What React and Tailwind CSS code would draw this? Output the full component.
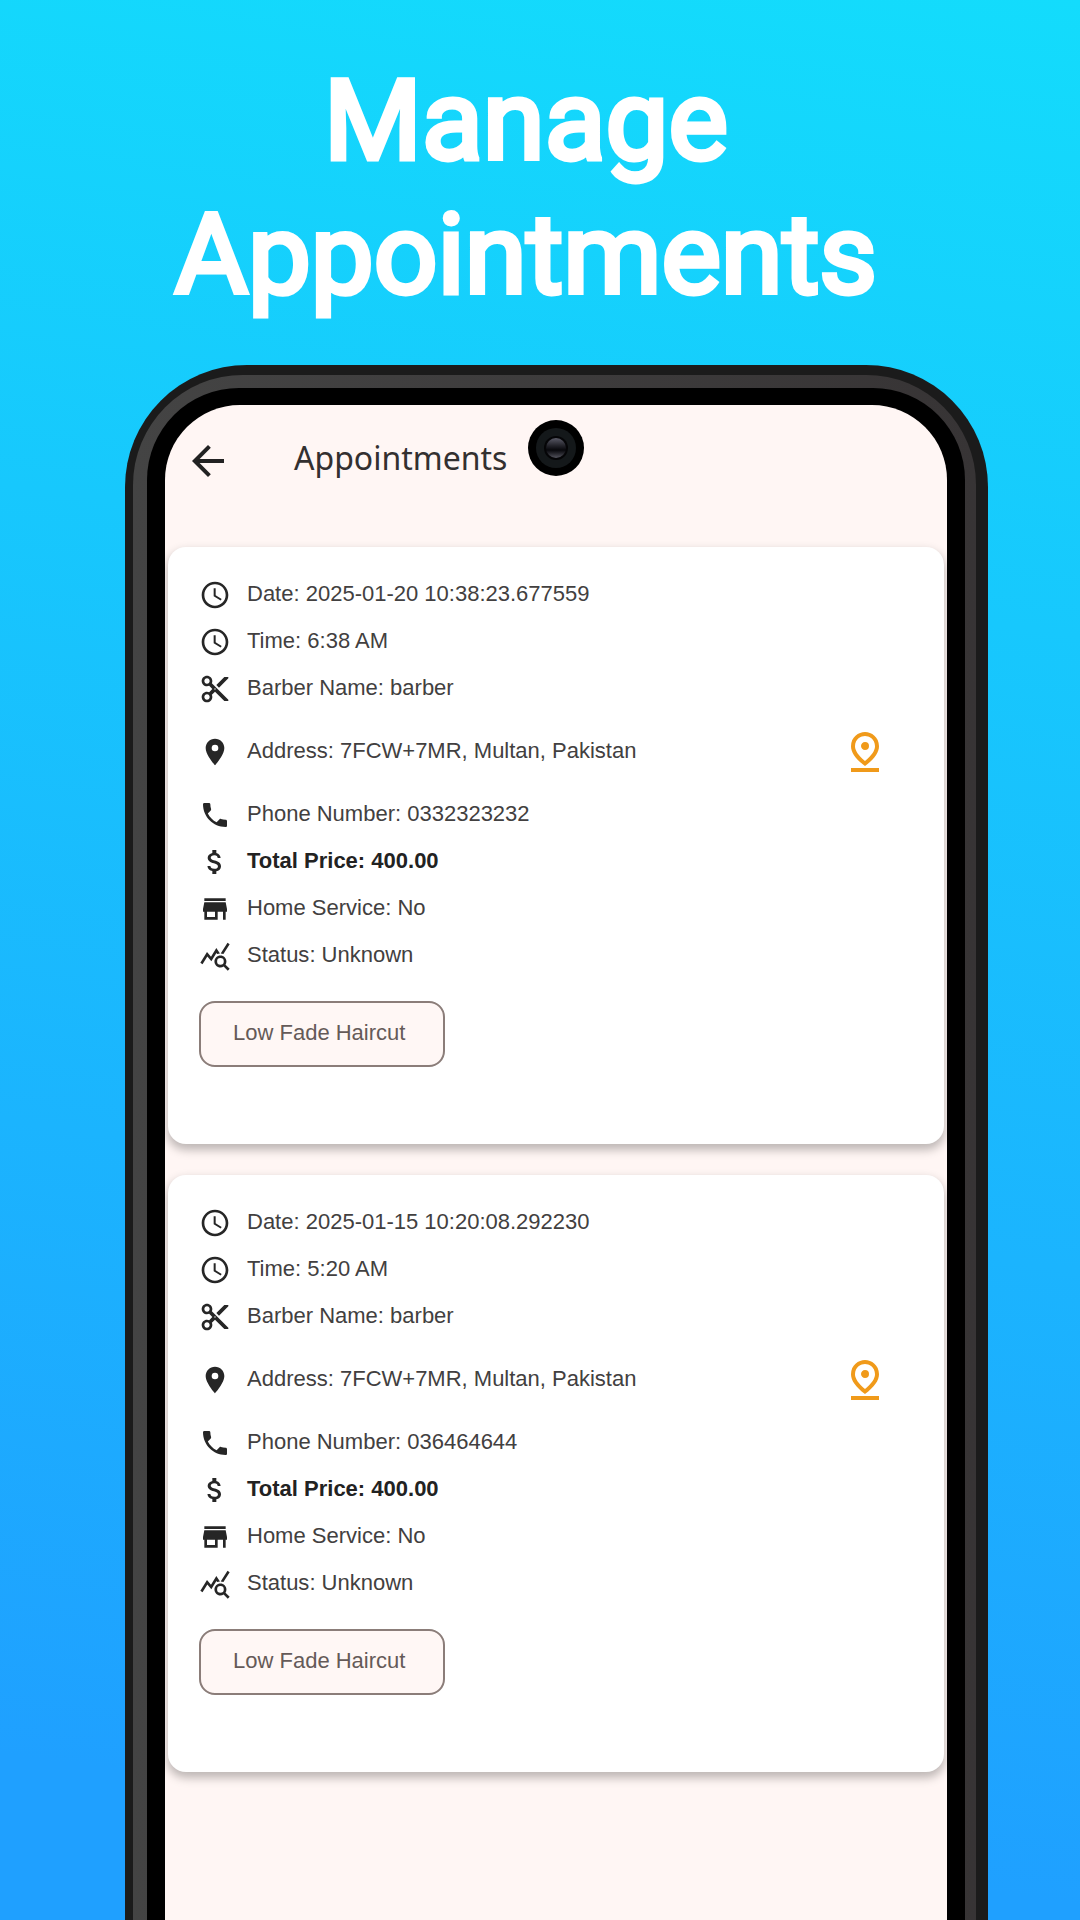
import React from "react";
import {
  MdAccessTime,
  MdArrowBack,
  MdAttachMoney,
  MdContentCut,
  MdLocationOn,
  MdOutlinePinDrop,
  MdPhone,
  MdQueryStats,
  MdStore,
} from "react-icons/md";

const appointments = [
  {
    date: "2025-01-20 10:38:23.677559",
    time: "6:38 AM",
    barber: "barber",
    address: "7FCW+7MR, Multan, Pakistan",
    phone: "0332323232",
    price: "400.00",
    homeService: "No",
    status: "Unknown",
    service: "Low Fade Haircut",
  },
  {
    date: "2025-01-15 10:20:08.292230",
    time: "5:20 AM",
    barber: "barber",
    address: "7FCW+7MR, Multan, Pakistan",
    phone: "036464644",
    price: "400.00",
    homeService: "No",
    status: "Unknown",
    service: "Low Fade Haircut",
  },
];

function Row({ icon: Icon, label, value, bold, children }) {
  return (
    <li className="flex items-center gap-4">
      <Icon className="size-8 shrink-0 text-[#262626]" aria-hidden="true" />
      <span
        className={
          bold
            ? "flex-1 pb-0.5 text-[22px] leading-7 font-bold text-[#222222]"
            : "flex-1 pb-0.5 text-[22px] leading-7 text-[#424040]"
        }
      >
        {label}: {value}
      </span>
      {children}
    </li>
  );
}

function AppointmentCard({ item }) {
  return (
    <article className="rounded-[18px] bg-white px-[31px] pt-8 pb-[77px] font-['Liberation_Sans',sans-serif] shadow-[0_5px_10px_1px_rgba(0,0,0,0.26)]">
      <ul className="flex flex-col gap-[15px]">
        <Row icon={MdAccessTime} label="Date" value={item.date} />
        <Row icon={MdAccessTime} label="Time" value={item.time} />
        <Row icon={MdContentCut} label="Barber Name" value={item.barber} />
        <Row icon={MdLocationOn} label="Address" value={item.address}>
          <button
            type="button"
            aria-label="Open map"
            className="flex h-16 w-24 items-center justify-center text-[#f09a1a]"
          >
            <MdOutlinePinDrop className="size-12" />
          </button>
        </Row>
        <Row icon={MdPhone} label="Phone Number" value={item.phone} />
        <Row icon={MdAttachMoney} label="Total Price" value={item.price} bold />
        <Row icon={MdStore} label="Home Service" value={item.homeService} />
        <Row icon={MdQueryStats} label="Status" value={item.status} />
      </ul>
      <button
        type="button"
        className="mt-[29px] rounded-2xl border-2 border-[#8b7d79] bg-[#fff7f5] pt-4 pr-[38px] pb-[18px] pl-8 text-[22px] leading-7 text-[#655a58]"
      >
        {item.service}
      </button>
    </article>
  );
}

function Camera() {
  return (
    <div className="absolute top-[15px] left-1/2 flex size-14 -translate-x-1/2 items-center justify-center rounded-full bg-black">
      <div className="flex size-10 items-center justify-center rounded-full bg-[#14181a]">
        <div className="flex size-6 items-center justify-center rounded-full bg-[#050507]">
          <div className="size-5 rounded-full bg-linear-to-b from-[#5b5b68] via-[#08080c] via-60% to-[#55555f]" />
        </div>
      </div>
    </div>
  );
}

export default function App() {
  return (
    <main className="flex min-h-screen flex-col overflow-hidden bg-[linear-gradient(188deg,#13dcfc_0%,#1fa0ff_92%)] font-['Roboto',sans-serif]">
      <h1 className="pt-[54px] pr-7 text-center text-[112px] leading-[134px] font-normal text-white [-webkit-text-stroke:5px_white]">
        Manage
        <br />
        Appointments
      </h1>

      <div className="mt-[43px] mr-[92px] ml-[125px] flex flex-1 flex-col rounded-t-[122px] bg-[#1b1b1b] pt-[10px] pr-3 pl-2">
        <div className="flex flex-1 flex-col rounded-t-[110px] bg-linear-to-r from-[#444444] to-[#373435] pt-[13px] pr-[11px] pl-[14px]">
          <div className="flex flex-1 flex-col rounded-t-[92px] bg-black px-[18px] pt-[17px]">
            <div className="relative flex flex-1 flex-col overflow-hidden rounded-t-[75px] bg-[#fff6f4]">
              <Camera />
              <header className="flex h-[142px] items-start gap-[62px] pt-8 pl-[19px]">
                <button type="button" aria-label="Back" className="text-[#222222]">
                  <MdArrowBack className="size-12" />
                </button>
                <h2 className="font-['Noto_Sans',sans-serif] text-[32px] leading-[42px] text-[#333030]">
                  Appointments
                </h2>
              </header>
              <section className="flex flex-col gap-[31px] px-[3px]">
                {appointments.map((item) => (
                  <AppointmentCard key={item.date} item={item} />
                ))}
              </section>
            </div>
          </div>
        </div>
      </div>
    </main>
  );
}
